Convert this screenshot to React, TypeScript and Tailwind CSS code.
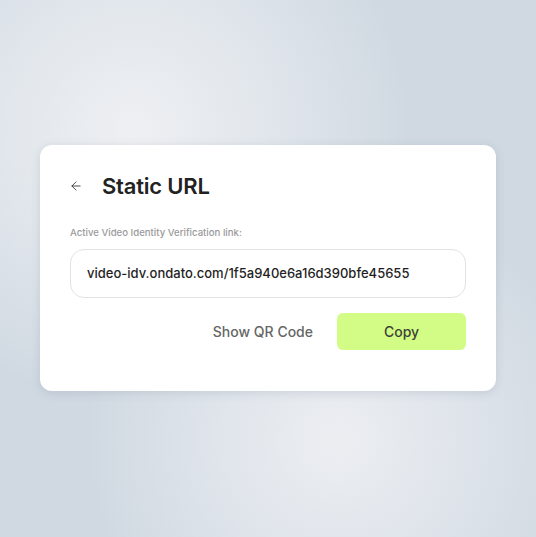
import { ArrowLeft } from "lucide-react";

export default function App() {
  return (
    <div
      className="flex h-[537px] w-[536px] items-start justify-center bg-[#d0d9e2] bg-[radial-gradient(circle_at_25%_24%,#eef0f3_0%,rgba(238,240,243,0.6)_22%,rgba(238,240,243,0)_48%),radial-gradient(circle_at_63%_82%,#eceef2_0%,rgba(236,238,242,0.6)_20%,rgba(236,238,242,0)_45%)] pt-[145px]"
      style={{ fontFamily: "Inter, 'Noto Sans', sans-serif" }}
    >
      <div className="w-[456px] rounded-[12px] bg-white px-[30px] pb-[41px] pt-[27px] shadow-[0_2px_10px_rgba(90,105,125,0.18)]">
        <div className="flex items-center">
          <button className="-ml-[1px] flex h-[28px] w-[17px] items-center text-[#333]">
            <ArrowLeft size={14} strokeWidth={1.5} />
          </button>
          <h1 className="ml-[16px] text-[22px] font-semibold leading-[28px] tracking-[-0.2px] text-[#222]">
            Static URL
          </h1>
        </div>

        <p className="mt-[26px] text-[9.6px] font-medium leading-[14px] text-[#9a9a9a]">
          Active Video Identity Verification link:
        </p>

        <div className="mt-[9px] flex h-[49px] items-center rounded-[14px] border border-[#e2e3e5] px-[16px] text-[13px] font-medium text-[#1f1f1f]">
          video-idv.ondato.com/1f5a940e6a16d390bfe45655
        </div>

        <div className="mt-[15px] flex justify-end">
          <button className="h-[37px] px-[24px] text-[14px] font-medium text-[#666]">
            Show QR Code
          </button>
          <button className="h-[37px] w-[129px] rounded-[6px] bg-[#d2fc85] text-[14px] font-medium text-[#3d4236]">
            Copy
          </button>
        </div>
      </div>
    </div>
  );
}
